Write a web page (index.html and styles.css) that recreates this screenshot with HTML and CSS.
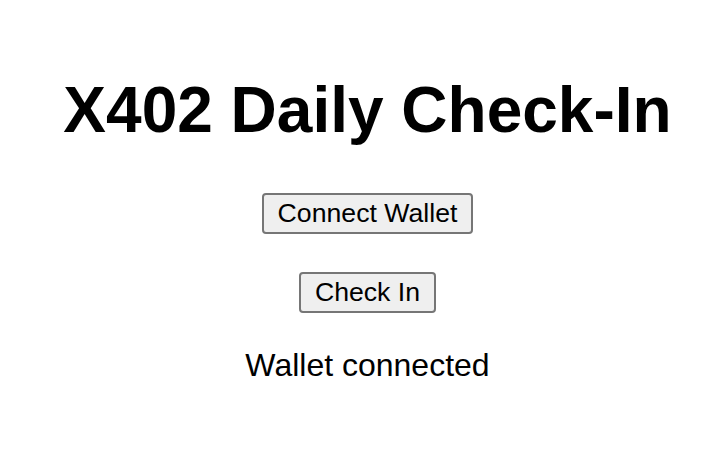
FILE: index.html
```html
<!DOCTYPE html>
<html lang="en">
<head>
    <meta charset="UTF-8">
    <meta name="viewport" content="width=device-width, initial-scale=1.0">
    <title>X402 Daily Check-In</title>
    <link rel="stylesheet" href="styles.css">
</head>
<body>
    <div class="app">
        <h1>X402 Daily Check-In</h1>
        <button id="connectBtn" class="connect">Connect Wallet</button>
        <button id="checkInBtn" class="check-in">Check In</button>
        <p id="status" class="status">Wallet connected</p>
    </div>
</body>
</html>
```

FILE: styles.css
```css
body {
    margin: 0;
    font-family: "Liberation Sans", Arial, sans-serif;
    background: #fff;
    color: #000;
}
.app {
    display: flex;
    flex-direction: column;
    align-items: center;
    padding: 73px 0 0 21px;
    text-align: center;
}
h1 {
    margin: 0;
    font-size: 64px;
    font-weight: bold;
}
button {
    font-family: "Liberation Sans", Arial, sans-serif;
    font-size: 26.67px;
    color: #000;
    background: #efefef;
    border: 2px solid #767676;
    border-radius: 4px;
    padding: 3px 14px;
    cursor: pointer;
}
.connect {
    margin-top: 46px;
}
.check-in {
    margin-top: 38px;
}
.status {
    margin: 34px 0 0;
    font-size: 32px;
}
```
